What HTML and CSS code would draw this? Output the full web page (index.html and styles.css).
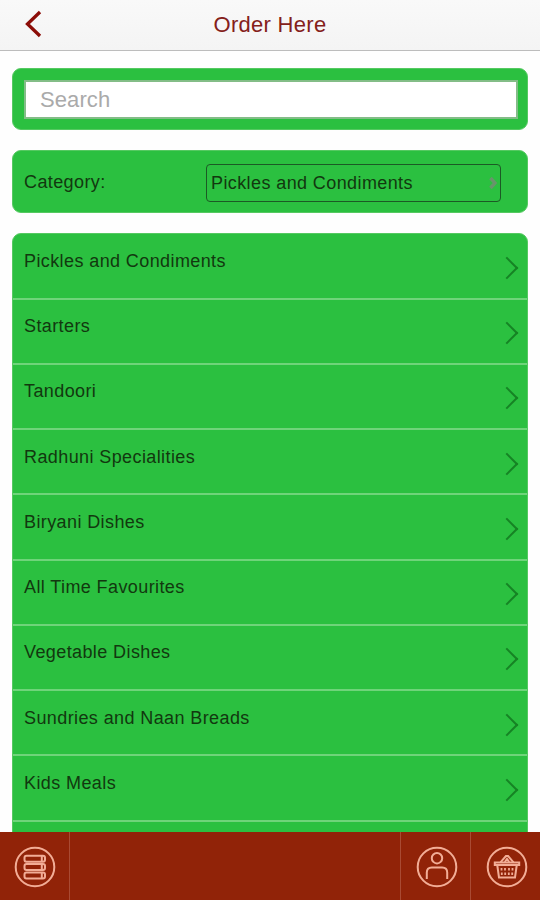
FILE: index.html
```html
<!DOCTYPE html>
<html lang="en">
<head>
    <meta charset="UTF-8">
    <title>Order Here</title>
    <link rel="stylesheet" href="styles.css">
</head>
<body>
<header class="topbar">
    <a class="back" href="#" aria-label="Back">
        <svg width="20" height="30" viewBox="0 0 20 30"><path d="M18 3 L5.5 15 L18 27"/></svg>
    </a>
    <h1>Order Here</h1>
</header>
<main class="content">
    <div class="panel search">
        <input type="text" placeholder="Search">
    </div>
    <div class="panel category">
        <span class="label">Category:</span>
        <div class="select">
            <span class="value">Pickles and Condiments</span>
            <svg width="9" height="14" viewBox="0 0 9 14"><path d="M1.5 2 L6 7 L1.5 12"/></svg>
        </div>
    </div>
    <ul class="list">
        <li><span>Pickles and Condiments</span><i class="arrow"></i></li>
        <li><span>Starters</span><i class="arrow"></i></li>
        <li><span>Tandoori</span><i class="arrow"></i></li>
        <li><span>Radhuni Specialities</span><i class="arrow"></i></li>
        <li><span>Biryani Dishes</span><i class="arrow"></i></li>
        <li><span>All Time Favourites</span><i class="arrow"></i></li>
        <li><span>Vegetable Dishes</span><i class="arrow"></i></li>
        <li><span>Sundries and Naan Breads</span><i class="arrow"></i></li>
        <li><span>Kids Meals</span><i class="arrow"></i></li>
        <li></li>
    </ul>
</main>
<footer class="tabbar">
    <a class="tab menu" href="#" aria-label="Menu">
        <svg width="42" height="42" viewBox="0 0 42 42">
            <circle cx="21" cy="21" r="19.3"/>
            <rect x="10.5" y="9.8" width="20.5" height="6" rx="2"/>
            <rect x="10.5" y="18.1" width="20.5" height="6" rx="2"/>
            <rect x="10.5" y="26.4" width="20.5" height="6" rx="2"/>
            <path d="M27.8 10v5.5M27.8 18.3v5.5M27.8 26.6v5.5"/>
        </svg>
    </a>
    <a class="tab user" href="#" aria-label="Account">
        <svg width="42" height="42" viewBox="0 0 42 42">
            <circle cx="21" cy="21" r="19.3"/>
            <circle cx="21" cy="12.2" r="5.2"/>
            <path d="M10.8 33v-6.5q0-5 5-5h10.4q5 0 5 5v6.5"/>
        </svg>
    </a>
    <a class="tab basket" href="#" aria-label="Basket">
        <svg width="42" height="42" viewBox="0 0 42 42">
            <circle cx="21" cy="21" r="19.3"/>
            <path d="M14.5 16.3l5.4-6.2h2.2l5.4 6.2M18.8 16l2.2-3 2.2 3"/>
            <path d="M8.8 16.5h24.4v2.6h-24.4z"/>
            <path d="M11.3 19.5l1.7 12h16l1.7-12"/>
            <path class="weave" d="M15.5 22v2.5M19 22v2.5M23 22v2.5M26.5 22v2.5M15.8 26.5v2.5M19.2 26.5v2.5M22.8 26.5v2.5M26.2 26.5v2.5"/>
        </svg>
    </a>
</footer>
</body>
</html>
```

FILE: styles.css
```css
* {
    margin: 0;
    padding: 0;
    box-sizing: border-box;
    list-style: none;
}

body {
    height: 900px;
    display: flex;
    flex-direction: column;
    overflow: hidden;
    background: #fefefe;
    color: #12380f;
    font: 18px/22px "Liberation Sans", Arial, sans-serif;
    letter-spacing: 0.4px;
}

.topbar {
    flex: none;
    height: 51px;
    display: grid;
    grid-template-columns: 60px 1fr 60px;
    align-items: center;
    background: linear-gradient(#f9f9f9, #f4f4f4);
    border-bottom: 1px solid #bcbcbc;
}

.back {
    padding-left: 22px;
    height: 32px;
}

.back path {
    fill: none;
    stroke: #8c0d08;
    stroke-width: 3.3;
}

.topbar h1 {
    text-align: center;
    font-size: 22px;
    font-weight: normal;
    letter-spacing: 0.3px;
    color: #84201a;
}

.content {
    flex: 1;
    min-height: 0;
    overflow: hidden;
    display: flex;
    flex-direction: column;
    gap: 20px;
    padding: 17.4px 12px 0;
}

.panel {
    flex: none;
    display: flex;
    align-items: center;
    height: 63px;
    border: 1px solid #55c961;
    border-radius: 9px;
    background: #2bc040;
}

.search {
    padding: 1px 9px 0 11px;
    height: 62px;
}

.search input {
    width: 100%;
    height: 39px;
    padding: 0 14px;
    border: 2px solid #83bd87;
    background: #fff;
    font: 22px "Liberation Sans", Arial, sans-serif;
    letter-spacing: 0.1px;
}

.search input::placeholder {
    color: #aaa;
}

.category {
    padding: 0 26px 0 11px;
    justify-content: space-between;
}

.select {
    display: flex;
    align-items: center;
    justify-content: space-between;
    width: 295px;
    height: 38px;
    margin-top: 2px;
    padding: 0 2px 0 4px;
    border: 1.5px solid #1c5a25;
    border-radius: 4px;
}

.select path {
    fill: none;
    stroke: #68956b;
    stroke-width: 3.4;
}

.list {
    flex: none;
    border: 1px solid #55c961;
    border-radius: 9px;
    background: #2bc040;
}

.list li {
    display: flex;
    justify-content: space-between;
    height: 65.25px;
    padding: 15.5px 8px 0 11px;
    border-bottom: 2px solid #6fd47a;
}

.arrow {
    width: 16px;
    height: 16px;
    margin: 10px 4.5px 0 0;
    border: solid #168324;
    border-width: 2px 2px 0 0;
    transform: rotate(45deg);
}

.tabbar {
    flex: none;
    display: flex;
    height: 68px;
    background: #912308;
}

.tab {
    display: flex;
    align-items: center;
    justify-content: center;
    width: 70px;
    padding-top: 2px;
}

.tab svg {
    fill: none;
    stroke: #f2ad96;
    stroke-width: 2;
}

.menu {
    border-right: 1px solid #a94a33;
}

.user {
    margin-left: auto;
    padding-left: 2px;
    border-left: 1px solid #a94a33;
}

.basket {
    padding-left: 2px;
    border-left: 1px solid #a94a33;
}

.tab .weave {
    stroke-width: 1.8;
}
```
